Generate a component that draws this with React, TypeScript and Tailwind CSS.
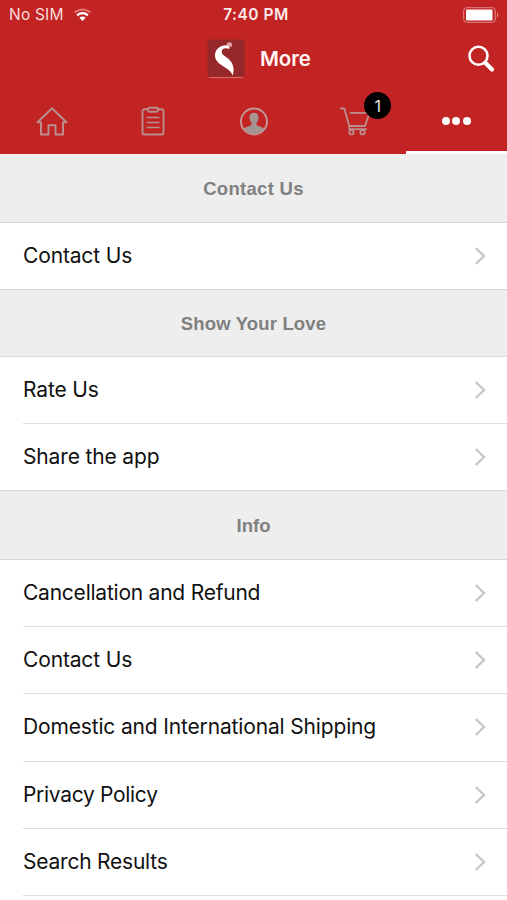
import React from "react";

type Row = { label: string; height: string; tracking: string; last?: boolean };
type Section = { title: string; height: string; tracking: string; rows: Row[] };

const sections: Section[] = [
  {
    title: "Contact Us",
    height: "h-[69px]",
    tracking: "tracking-[0.3px]",
    rows: [{ label: "Contact Us", height: "h-[66px]", tracking: "tracking-[-0.15px]", last: true }],
  },
  {
    title: "Show Your Love",
    height: "h-[67px]",
    tracking: "tracking-[0.16px]",
    rows: [
      { label: "Rate Us", height: "h-[67px]", tracking: "tracking-[-0.15px]" },
      { label: "Share the app", height: "h-[66px]", tracking: "tracking-[-0.15px]", last: true },
    ],
  },
  {
    title: "Info",
    height: "h-[69px]",
    tracking: "tracking-[0px]",
    rows: [
      { label: "Cancellation and Refund", height: "h-[67px]", tracking: "tracking-[-0.23px]" },
      { label: "Contact Us", height: "h-[67px]", tracking: "tracking-[-0.15px]" },
      { label: "Domestic and International Shipping", height: "h-[68px]", tracking: "tracking-[-0.155px]" },
      { label: "Privacy Policy", height: "h-[67px]", tracking: "tracking-[-0.31px]" },
      { label: "Search Results", height: "h-[67px]", tracking: "tracking-[-0.22px]" },
    ],
  },
];

function StatusBar() {
  return (
    <div className="grid h-[30px] grid-cols-3 items-center pl-[9px] pr-[8px] text-white">
      <div className="flex items-center gap-[9px]">
        <span className="text-[15.5px] leading-[30px] tracking-[0.2px] text-[#fbdcdc]">No SIM</span>
        <svg width="19" height="14" viewBox="0 0 18 14" fill="none">
          <path d="M1 4.6C5.5.3 12.5.3 17 4.6" stroke="#e07474" strokeWidth="2" />
          <path d="M3.6 7.3c3.1-2.9 7.7-2.9 10.8 0" stroke="#fff" strokeWidth="2.3" />
          <path d="M5.9 9.8C7.7 8.1 10.3 8.1 12.1 9.8L9 13Z" fill="#fff" />
        </svg>
      </div>
      <span className="pl-[4px] text-center text-[15.5px] font-semibold tracking-[0.5px] text-[#fdeaea]">7:40 PM</span>
      <svg className="justify-self-end" width="36" height="16" viewBox="0 0 36 16" fill="none">
        <rect x="0.7" y="0.7" width="31.6" height="14.6" rx="3" stroke="#e28a8a" strokeWidth="1" />
        <rect x="3" y="2.5" width="26.5" height="11" rx="1" fill="#fff" />
        <path d="M34 5.500c1.800.5 1.800 4.500 0 5Z" fill="#e28a8a" />
      </svg>
    </div>
  );
}

function TitleBar() {
  return (
    <div className="flex h-[57px] items-center pl-[207px] pr-[12px]">
      <svg width="38" height="40" viewBox="0 0 38 40">
        <rect x="0.500" y="0.500" width="37" height="37" rx="2" fill="#96272a" />
        <path d="M2 38.600h34" stroke="#cc7777" strokeWidth="1" />
        <path
          d="M20.500 6.200C13.500 5.700 8.500 9.800 8 15.500c-.5 5.500 3.500 8.700 8.200 11.700 4 2.500 8 4.800 9.400 9.300 2.100-6 1-11.500-3.500-16-3.500-3.400-7.600-4.500-7.400-8.300.2-3 3.500-3.700 7.700-2.400.8-1.200-.4-3-1.900-3.600Z"
          fill="#fff"
        />
        <path d="m19.800 5.500.7-2.200 1.400.6L23 2.600l1.200 1.600 1.300.6-.8 1.400.3 1.900-1.800-.6-1.800-.2Z" fill="#e9a5a5" />
      </svg>
      <h1 className="ml-[15px] flex-1 text-[20.5px] font-semibold leading-[30px] tracking-[-0.1px] text-[#fff3f3]">More</h1>
      <svg width="28" height="28" viewBox="0 0 28 28" fill="none" stroke="#fff">
        <circle cx="11.500" cy="10.800" r="9" strokeWidth="2.600" />
        <path d="m18.500 18 6.500 6.500" strokeWidth="4.200" strokeLinecap="round" />
      </svg>
    </div>
  );
}

function TabBar() {
  return (
    <nav className="grid h-[67px] grid-cols-5 text-[#b98e8c]">
      <div className="flex items-center justify-center pl-[2px]">
        <svg width="34" height="32" viewBox="0 0 34 32" fill="none" stroke="currentColor" strokeWidth="2" strokeLinejoin="round">
          <path d="M17 3.300 2.500 17.300H6V29.500h7.500V20.200h7v9.300H28V17.300h3.500Z" />
        </svg>
      </div>
      <div className="flex items-center justify-center pl-[1px]">
        <svg width="24" height="32" viewBox="0 0 24 32" fill="none" stroke="currentColor" strokeWidth="1.900">
          <path d="M7 4.300H3.500a2 2 0 0 0-2 2V27.500a2 2 0 0 0 2 2h17a2 2 0 0 0 2-2V6.300a2 2 0 0 0-2-2H17" />
          <rect x="7" y="2.700" width="10" height="4" rx="1.500" />
          <path d="M5.500 12.500h13M5.500 17.500h13M5.500 22.500h13" strokeWidth="1.500" />
        </svg>
      </div>
      <div className="flex items-center justify-center pl-[1px]">
        <svg width="30" height="32" viewBox="0 0 30 32" fill="none">
          <circle cx="15" cy="16.500" r="13" stroke="#c49a98" strokeWidth="1.900" />
          <path
            d="M15 7.700c-3 0-4.700 2-4.500 4.800.1 2.600.8 4.200 2 5.300v2.200c-2 1.200-5 1.500-7.500 3.600 2.200 3.200 5.800 5.300 10 5.300s7.800-2.100 10-5.300c-2.500-2.100-5.500-2.400-7.500-3.600v-2.200c1.200-1.100 1.900-2.700 2-5.300.2-2.800-1.500-4.800-4.500-4.800Z"
            fill="#a49593"
          />
        </svg>
      </div>
      <div className="relative flex items-center justify-center pl-[1px]">
        <svg width="32" height="32" viewBox="0 0 32 32" fill="none" stroke="currentColor" strokeWidth="1.800" strokeLinejoin="round" strokeLinecap="round">
          <path d="M2 3.500h3.300L10.300 21H26L30.500 7.800H11.500" />
          <path d="M10.300 21v3.200H27" />
          <circle cx="12.500" cy="27.200" r="2.200" />
          <circle cx="23.500" cy="27.200" r="2.200" />
        </svg>
        <span className="absolute left-[60px] top-[5px] flex size-[27px] items-center justify-center rounded-full bg-black text-[16px] text-[#e8e8e8]">1</span>
      </div>
      <div className="flex items-center justify-center gap-[2.500px] border-b-[3px] border-white pt-[4px]">
        <i className="size-[8px] rounded-full bg-white" />
        <i className="size-[8px] rounded-full bg-white" />
        <i className="size-[8px] rounded-full bg-white" />
      </div>
    </nav>
  );
}

function ListRow({ row }: { row: Row }) {
  return (
    <div className={row.last ? "border-b border-[#d9d9d9] pl-[23px]" : "pl-[23px]"}>
      <div
        className={`${row.height} ${row.last ? "" : "border-b border-[#dedede]"} flex items-center justify-between pb-[1px] pr-[21px]`}
      >
        <span className={`${row.tracking} whitespace-nowrap text-[21px] leading-[30px] text-[#111]`}>{row.label}</span>
        <svg width="12" height="20" viewBox="0 0 12 20" fill="none" stroke="#c6c6c8" strokeWidth="2.400">
          <path d="m1.700 2 8.300 8-8.300 8" />
        </svg>
      </div>
    </div>
  );
}

export default function App() {
  return (
    <div className="h-[900px] w-[507px] overflow-hidden bg-white font-['Inter',sans-serif]">
      <header className="h-[154px] bg-[#c22323]">
        <StatusBar />
        <TitleBar />
        <TabBar />
      </header>
      <main>
        {sections.map((section) => (
          <section key={section.title}>
            <h2
              className={`${section.height} ${section.tracking} flex items-center justify-center border-b border-[#d9d9d9] bg-[#eee] pt-[1px] font-['Liberation_Sans',sans-serif] text-[18.5px] font-bold text-[#808080]`}
            >
              {section.title}
            </h2>
            {section.rows.map((row) => (
              <ListRow key={row.label} row={row} />
            ))}
          </section>
        ))}
      </main>
    </div>
  );
}
